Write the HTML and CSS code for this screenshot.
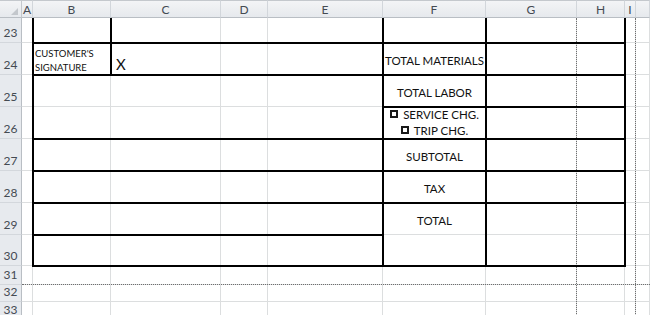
FILE: index.html
```html
<!DOCTYPE html>
<html>
<head>
<meta charset="utf-8">
<link rel="stylesheet" href="styles.css">
</head>
<body>
<div class="sheet">
  <div class="corner"><span class="tri"></span></div>
  <div class="colhdrs">
    <div class="colhdr">A</div>
    <div class="colhdr">B</div>
    <div class="colhdr">C</div>
    <div class="colhdr">D</div>
    <div class="colhdr">E</div>
    <div class="colhdr">F</div>
    <div class="colhdr">G</div>
    <div class="colhdr">H</div>
    <div class="colhdr">I</div>
    <div class="colhdr"></div>
  </div>
  <div class="rowhdrs">
    <div class="rowhdr">23</div>
    <div class="rowhdr">24</div>
    <div class="rowhdr">25</div>
    <div class="rowhdr">26</div>
    <div class="rowhdr">27</div>
    <div class="rowhdr">28</div>
    <div class="rowhdr">29</div>
    <div class="rowhdr">30</div>
    <div class="rowhdr">31</div>
    <div class="rowhdr">32</div>
    <div class="rowhdr">33</div>
  </div>
  <div class="grid">
    <div class="vlines">
      <div></div><div></div><div></div><div></div><div></div>
      <div></div><div></div><div></div><div></div><div></div>
    </div>
    <div class="hlines">
      <div></div><div></div><div></div><div></div><div></div><div></div>
      <div></div><div></div><div></div><div></div><div></div>
    </div>
    <div class="pb pb-gh"></div>
    <div class="pb pb-ij"></div>
    <div class="pb pb-row"></div>

    <div class="box open col-b row-23"></div>
    <div class="box open col-ce row-23"></div>
    <div class="box open col-f row-23"></div>
    <div class="box open col-gh row-23"></div>

    <div class="box sig col-b row-24"><span>CUSTOMER'S</span><span>SIGNATURE</span></div>
    <div class="box mark col-ce row-24">X</div>
    <div class="box label col-f row-24">TOTAL MATERIALS</div>
    <div class="box col-gh row-24"></div>

    <div class="box col-be row-25-26"></div>
    <div class="box label col-f row-25">TOTAL LABOR</div>
    <div class="box col-gh row-25"></div>
    <div class="box checks col-f row-26">
      <div class="line"><span class="chk"></span>SERVICE CHG.</div>
      <div class="line"><span class="chk"></span>TRIP CHG.</div>
    </div>
    <div class="box col-gh row-26"></div>

    <div class="box col-be row-27"></div>
    <div class="box label col-f row-27">SUBTOTAL</div>
    <div class="box col-gh row-27"></div>

    <div class="box col-be row-28"></div>
    <div class="box label col-f row-28">TAX</div>
    <div class="box col-gh row-28"></div>

    <div class="box col-be row-29"></div>
    <div class="box total col-f row-29-30"><span>TOTAL</span></div>
    <div class="box col-gh row-29-30"></div>
    <div class="box col-be row-30"></div>

    <div class="frame"></div>
  </div>
</div>
</body>
</html>
```

FILE: styles.css
```css
html, body {
  margin: 0;
  padding: 0;
  background: #ffffff;
  overflow: hidden;
}

body {
  width: 650px;
  height: 315px;
  font-family: Lato, "Open Sans", sans-serif;
  color: #111111;
}

.sheet {
  display: grid;
  grid-template-columns: 22px 628px;
  grid-template-rows: 18px auto;
}

/* headers */
.corner {
  display: flex;
  justify-content: flex-end;
  align-items: flex-end;
  padding: 0 3px 2px 0;
  box-sizing: border-box;
  background: linear-gradient(#f3f4f6, #e6e9ed);
  border-top: 1px solid #c4c8cd;
  border-right: 1px solid #c4c8cd;
  border-bottom: 1px solid #b9bec4;
}

.tri {
  width: 0;
  height: 0;
  border-left: 7px solid transparent;
  border-bottom: 7px solid #c3c7cc;
}

.colhdrs {
  display: grid;
  grid-template-columns: 11px 78px 110px 47px 115px 103px 91px 48px 11px 1fr;
}

.colhdr {
  box-sizing: border-box;
  background: linear-gradient(#f3f4f6, #e6e9ed);
  border-top: 1px solid #c4c8cd;
  border-right: 1px solid #d2d6db;
  border-bottom: 1px solid #b9bec4;
  font-size: 12px;
  line-height: 16px;
  padding-top: 1px;
  text-align: center;
  color: #444a52;
  overflow: hidden;
}

.rowhdrs {
  display: grid;
  grid-template-rows: 25px 32px 32px 32px 32px 32px 32px 31px 19px 17px 18px;
}

.rowhdr {
  box-sizing: border-box;
  display: flex;
  justify-content: center;
  align-items: flex-end;
  background: #e7eaee;
  border-right: 1px solid #b9bec4;
  border-bottom: 1px solid #d3d7dc;
  font-size: 12px;
  line-height: 16px;
  padding-bottom: 1px;
  color: #444a52;
}

/* cell grid */
.grid {
  display: grid;
  grid-template-columns: [a] 11px [b] 78px [c] 110px [d] 47px [e] 115px [f] 103px [g] 91px [h] 48px [i] 11px [j] 1fr [end];
  grid-template-rows: [r23] 25px [r24] 32px [r25] 32px [r26] 32px [r27] 32px [r28] 32px [r29] 32px [r30] 31px [r31] 19px [r32] 17px [r33] 18px [rend];
}

.vlines {
  grid-area: 1 / 1 / -1 / -1;
  display: grid;
  grid-template-columns: 11px 78px 110px 47px 115px 103px 91px 48px 11px 1fr;
}

.vlines > div {
  border-right: 1px solid #dcdedf;
}

.hlines {
  grid-area: 1 / 1 / -1 / -1;
  display: grid;
  grid-template-rows: 25px 32px 32px 32px 32px 32px 32px 31px 19px 17px 18px;
}

.hlines > div {
  border-bottom: 1px solid #dcdedf;
}

/* page breaks */
.pb-gh {
  grid-column: g / h;
  grid-row: 1 / -1;
  border-right: 1px dotted #6e6e6e;
}

.pb-ij {
  grid-column: i / j;
  grid-row: 1 / -1;
  border-right: 1px dotted #6e6e6e;
}

.pb-row {
  grid-column: 1 / -1;
  grid-row: r31 / r32;
  border-bottom: 1px dotted #6e6e6e;
}

/* form */
.box {
  box-sizing: border-box;
  border: 1px solid #000000;
  display: flex;
  align-items: center;
  justify-content: center;
  font-size: 11.5px;
  color: #111111;
  white-space: nowrap;
}

.open {
  border-top: 0;
}

.frame {
  grid-area: r23 / b / r31 / i;
  border: 1px solid #000000;
  border-top: 0;
  margin: 0 -1px -1px -1px;
}

.col-b { grid-column: b / c; }
.col-ce { grid-column: c / f; }
.col-be { grid-column: b / f; }
.col-f { grid-column: f / g; }
.col-gh { grid-column: g / i; }

.row-23 { grid-row: r23 / r24; }
.row-24 { grid-row: r24 / r25; }
.row-25 { grid-row: r25 / r26; }
.row-26 { grid-row: r26 / r27; }
.row-25-26 { grid-row: r25 / r27; }
.row-27 { grid-row: r27 / r28; }
.row-28 { grid-row: r28 / r29; }
.row-29 { grid-row: r29 / r30; }
.row-30 { grid-row: r30 / r31; }
.row-29-30 { grid-row: r29 / r31; }

.label {
  padding-top: 2px;
}

.sig {
  flex-direction: column;
  align-items: flex-start;
  justify-content: center;
  padding: 3px 0 0 1px;
  font-size: 9.5px;
  line-height: 14px;
}

.mark {
  justify-content: flex-start;
  padding: 9px 0 0 4px;
  font-size: 15px;
}

.checks {
  flex-direction: column;
  justify-content: flex-start;
  padding-top: 0;
}

.line {
  display: flex;
  align-items: center;
  gap: 5px;
  height: 18px;
}

.line:first-child {
  margin-top: -2px;
}

.chk {
  box-sizing: border-box;
  width: 8px;
  height: 8px;
  border: 2px solid #1a1a1a;
}

.total {
  align-items: flex-start;
}

.total span {
  display: block;
  line-height: 31px;
  padding-top: 1px;
}
```
